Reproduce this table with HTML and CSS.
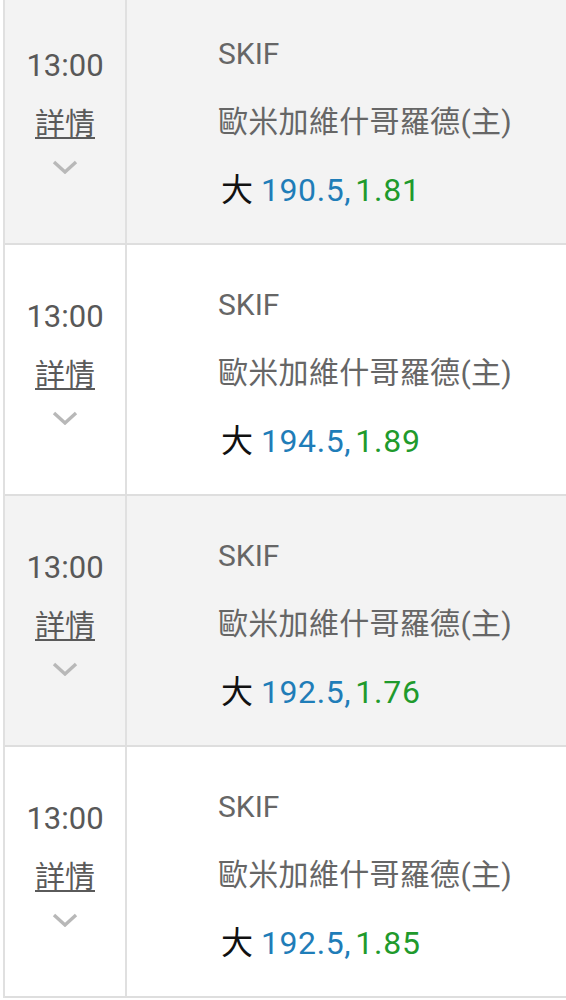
FILE: index.html
```html
<!DOCTYPE html>
<html lang="zh-Hant">
<head>
<meta charset="utf-8">
<link rel="stylesheet" href="styles.css">
</head>
<body>
<div class="list">
  <div class="row grey">
    <div class="time-col">
      <div class="time">13:00</div>
      <div class="detail">詳情</div>
      <svg class="chev" viewBox="0 0 26 14" width="26" height="14"><path d="M2 2 L13 12 L24 2" fill="none" stroke="#b8b8b8" stroke-width="3.4"/></svg>
    </div>
    <div class="info-col">
      <div class="league">SKIF</div>
      <div class="team">歐米加維什哥羅德(主)</div>
      <div class="odds"><span class="big">大</span> <span class="line">190.5,</span><span class="price">1.81</span></div>
    </div>
  </div>
  <div class="row">
    <div class="time-col">
      <div class="time">13:00</div>
      <div class="detail">詳情</div>
      <svg class="chev" viewBox="0 0 26 14" width="26" height="14"><path d="M2 2 L13 12 L24 2" fill="none" stroke="#b8b8b8" stroke-width="3.4"/></svg>
    </div>
    <div class="info-col">
      <div class="league">SKIF</div>
      <div class="team">歐米加維什哥羅德(主)</div>
      <div class="odds"><span class="big">大</span> <span class="line">194.5,</span><span class="price">1.89</span></div>
    </div>
  </div>
  <div class="row grey">
    <div class="time-col">
      <div class="time">13:00</div>
      <div class="detail">詳情</div>
      <svg class="chev" viewBox="0 0 26 14" width="26" height="14"><path d="M2 2 L13 12 L24 2" fill="none" stroke="#b8b8b8" stroke-width="3.4"/></svg>
    </div>
    <div class="info-col">
      <div class="league">SKIF</div>
      <div class="team">歐米加維什哥羅德(主)</div>
      <div class="odds"><span class="big">大</span> <span class="line">192.5,</span><span class="price">1.76</span></div>
    </div>
  </div>
  <div class="row">
    <div class="time-col">
      <div class="time">13:00</div>
      <div class="detail">詳情</div>
      <svg class="chev" viewBox="0 0 26 14" width="26" height="14"><path d="M2 2 L13 12 L24 2" fill="none" stroke="#b8b8b8" stroke-width="3.4"/></svg>
    </div>
    <div class="info-col">
      <div class="league">SKIF</div>
      <div class="team">歐米加維什哥羅德(主)</div>
      <div class="odds"><span class="big">大</span> <span class="line">192.5,</span><span class="price">1.85</span></div>
    </div>
  </div>
</div>
</body>
</html>
```
FILE: styles.css
```css
html, body {
  margin: 0;
  padding: 0;
  background: #ffffff;
}
body {
  font-family: Roboto, "Noto Sans CJK TC", sans-serif;
  font-size: 30px;
  overflow: hidden;
}
.list {
  margin-top: -6px;
  margin-left: 3px;
  border-left: 2px solid #e0e0e0;
}
.row {
  display: flex;
  height: 249px;
  border-bottom: 2px solid #dedede;
  background: #ffffff;
}
.row.grey {
  background: #f3f3f3;
}
.time-col {
  width: 122px;
  border-right: 2px solid #e0e0e0;
  display: flex;
  flex-direction: column;
  align-items: center;
  padding-top: 42px;
  box-sizing: border-box;
}
.time {
  font-size: 31px;
  line-height: 60px;
  color: #585858;
}
.detail {
  line-height: 56px;
  color: #5a5a5a;
  text-decoration: underline;
  text-underline-offset: 3px;
  text-decoration-thickness: 2px;
}
.chev {
  display: block;
  margin-top: 8px;
}
.info-col {
  flex: 1;
  padding-top: 26px;
  padding-left: 91px;
}
.league,
.team,
.odds {
  line-height: 68px;
  color: #666666;
  white-space: nowrap;
}
.team {
  letter-spacing: 0.3px;
}
.odds {
  font-size: 32px;
  padding-left: 3px;
}
.big {
  color: #111111;
}
.line {
  color: #1f7db8;
  letter-spacing: 0.6px;
  margin-right: 4px;
}
.price {
  color: #1f9a2c;
  letter-spacing: 0.8px;
}
```
